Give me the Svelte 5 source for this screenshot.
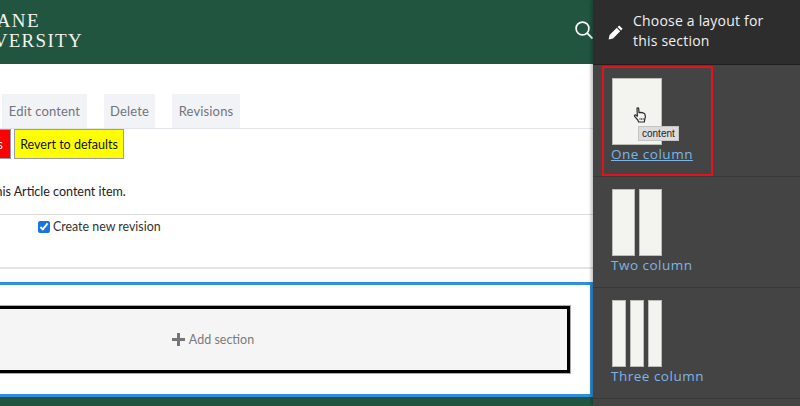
<script>
  const layouts = [
    { name: 'One column', cols: 1, hot: true },
    { name: 'Two column', cols: 2 },
    { name: 'Three column', cols: 3 }
  ];
</script>

<div class="page">
  <div class="main">
    <header class="top">
      <div class="logo">
        <div class="l1">TULANE</div>
        <div class="l2">UNIVERSITY</div>
      </div>
      <svg class="search" viewBox="0 0 20 20" width="20" height="20" aria-hidden="true">
        <circle cx="8.5" cy="8.5" r="6.4" fill="none" stroke="#fff" stroke-width="1.7" />
        <path d="M13.2 13.2 L18.5 18.5" stroke="#fff" stroke-width="1.9" fill="none" />
      </svg>
    </header>

    <nav class="tabs">
      <span class="tab t1">Edit content</span>
      <span class="tab t2">Delete</span>
      <span class="tab t3">Revisions</span>
    </nav>

    <div class="actions">
      <button class="btn red">Discard changes</button>
      <button class="btn yellow">Revert to defaults</button>
    </div>

    <p class="note">You are editing the layout for this Article content item.</p>

    <div class="revision">
      <label class="check"><input type="checkbox" checked /> <span>Create new revision</span></label>
    </div>

    <section class="section">
      <div class="add">
        <span class="plus"></span>
        <span>Add section</span>
      </div>
    </section>

    <div class="foot"></div>
  </div>

  <aside class="side">
    <div class="side-head">
      <svg class="pencil" viewBox="0 0 16 16" width="16" height="16" aria-hidden="true">
        <path d="M11.2 1.4 L14.6 4.8 L13 6.4 L9.6 3 Z M8.8 3.8 L12.2 7.2 L5 14.4 L0.6 15.4 L1.6 11 Z" fill="#fff" />
      </svg>
      <div class="side-title">Choose a layout for this section</div>
    </div>
    <ul class="list">
      {#each layouts as l}
        <li class="item">
          <div class="cell" class:hot={l.hot}>
            <div class="thumb">
              {#each Array(l.cols) as _}
                <div class="col"></div>
              {/each}
            </div>
            <a class="lnk" class:under={l.hot} href="#top">{l.name}</a>
            {#if l.hot}
              <svg class="hand" viewBox="0 0 14 16" width="14" height="16" aria-hidden="true">
                <path d="M4 1.6 C4 .6 5.6 .6 5.7 1.6 L6 5.6 L8 5.4 L10.2 5.9 L11.8 6.8 L12.4 9.6 L11.6 13 L11.4 15 L5.6 15 L4.8 13 L1.6 9.4 C1 8.2 2.2 7.4 3.2 8.2 L4.4 9.2 Z" fill="#f4f4f0" stroke="#2b2b2b" stroke-width="1.2" stroke-linejoin="round" />
                <path d="M7 11 V13 M8.6 11 V13 M10.2 11 V13" stroke="#444" stroke-width=".8" />
              </svg>
              <span class="tip">content</span>
            {/if}
          </div>
        </li>
      {/each}
    </ul>
  </aside>
</div>

<style>
  :global(body) { margin: 0; background: #fff; overflow: hidden; }
  .page {
    display: flex;
    width: 800px;
    height: 406px;
    overflow: hidden;
    font-family: Lato, "Open Sans", sans-serif;
  }
  .main {
    width: 593px;
    flex: none;
    overflow: hidden;
    display: flex;
    flex-direction: column;
    background: #fff;
  }
  .top {
    height: 64px;
    flex: none;
    background: #22553f;
    display: flex;
    align-items: center;
    justify-content: space-between;
  }
  .logo {
    margin-left: -44px;
    margin-top: -2px;
    font-family: "Liberation Serif", serif;
    color: #f2f2ea;
    font-size: 19px;
    letter-spacing: 1.3px;
    line-height: 20px;
    white-space: nowrap;
  }
  .search { margin-right: -1px; margin-top: -4px; }
  .tabs {
    height: 34px;
    margin-top: 30px;
    flex: none;
    display: flex;
    gap: 17px;
    padding-left: 2px;
    border-bottom: 1px solid #e4e4ec;
  }
  .tab {
    background: #f2f3f6;
    color: #71747f;
    font-size: 13px;
    display: flex;
    align-items: center;
    justify-content: center;
    letter-spacing: .15px;
  }
  .t1 { width: 85px; }
  .t2 { width: 51px; }
  .t3 { width: 68px; }
  .actions {
    display: flex;
    gap: 3px;
    height: 30px;
    flex: none;
    margin-left: -103px;
  }
  .btn {
    font: inherit;
    font-size: 12.5px;
    height: 30px;
    padding: 0;
    border: 1px solid #9a9aa8;
    color: #111;
    box-sizing: border-box;
    white-space: nowrap;
  }
  .red { background: #f00; color: #fff; width: 114px; text-align: right; padding-right: 7px; }
  .yellow { background: #ff0; width: 110px; }
  .note {
    margin: 24px 0 0 -171px;
    font-size: 12.5px;
    line-height: 18px;
    color: #222;
    white-space: nowrap;
    flex: none;
  }
  .revision {
    margin-top: 13px;
    height: 52px;
    flex: none;
    border-top: 1px solid #dcdcdc;
    border-bottom: 2px solid #e4e4e4;
  }
  .check {
    display: flex;
    align-items: center;
    gap: 3px;
    padding: 5px 0 0 38px;
    font-size: 12.4px;
    line-height: 13px;
    color: #333;
  }
  .check input { margin: 0; width: 12px; height: 12px; accent-color: #1a73e8; }
  .section {
    margin: 13px 0 0 -147px;
    height: 115px;
    flex: none;
    box-sizing: border-box;
    border: 3px solid #2f8fdc;
    padding: 21px 20px 0 0;
    background: #fff;
  }
  .add {
    height: 67px;
    box-sizing: border-box;
    border: 3px solid #000;
    background: #f5f5f5;
    outline: 1px solid #aaa;
    display: flex;
    align-items: center;
    justify-content: center;
    gap: 4px;
    color: #7a7a7a;
    font-size: 12.5px;
  }
  .plus {
    width: 13px;
    height: 13px;
    background:
      linear-gradient(#757575, #757575) center / 100% 3px no-repeat,
      linear-gradient(#757575, #757575) center / 3px 100% no-repeat;
  }
  .foot { flex: 1; background: #22553f; }

  .side {
    width: 207px;
    flex: none;
    background: #444;
    box-shadow: -2px 0 3px rgba(0, 0, 0, .25);
    color: #fff;
    position: relative;
  }
  .side-head {
    height: 64px;
    background: #2d2d2d;
    border-bottom: 1px solid #1f1f1f;
    display: flex;
    align-items: center;
    gap: 9px;
    padding-left: 15px;
  }
  .pencil { flex: none; }
  .side-title {
    font-family: "Open Sans", sans-serif;
    font-size: 14px;
    letter-spacing: .2px;
    line-height: 20px;
    width: 150px;
    color: #f0f0f0;
    margin-top: -2px;
  }
  .list { list-style: none; margin: 0; padding: 0; }
  .item { height: 110px; border-bottom: 1px solid #393939; padding-left: 18px; }
  .item:first-child { padding-top: 1px; padding-left: 9px; }
  .cell {
    position: relative;
    box-sizing: border-box;
    width: 111px;
    padding: 12px 0 0 0;
    height: 110px;
  }
  .item:first-child .cell { outline: 2px solid #e8101c; outline-offset: -2px; padding-left: 9px; }
  .thumb { display: flex; gap: 4px; width: 50px; height: 67px; margin-left: 1px; }
  .col { flex: 1; background: #f3f3ef; box-shadow: inset 0 0 0 1px #bdbdb8; }
  .lnk {
    display: block;
    font-family: "Open Sans", sans-serif;
    font-size: 13.5px;
    line-height: 18px;
    letter-spacing: .5px;
    color: #7db4e6;
    text-decoration: none;
    white-space: nowrap;
  }
  .under { text-decoration: underline; }
  .hand { position: absolute; left: 31px; top: 41px; }
  .tip {
    position: absolute;
    left: 36px;
    top: 60px;
    background: #dcdcdc;
    color: #222;
    font-family: "Liberation Sans", sans-serif;
    font-size: 10px;
    line-height: 13px;
    padding: 0 3px;
    border: 1px solid #c4c4c4;
  }
</style>
